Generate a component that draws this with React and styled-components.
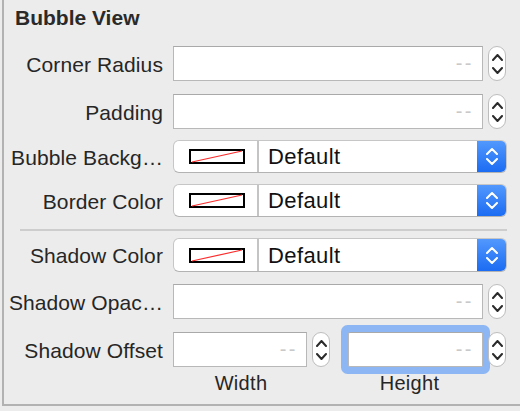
import styled, { createGlobalStyle } from "styled-components";

const GlobalStyle = createGlobalStyle`
  html, body {
    margin: 0;
    padding: 0;
    background: #ececec;
  }
  body {
    font-family: "Liberation Sans", Arial, Helvetica, sans-serif;
    color: #262626;
  }
`;

const Panel = styled.div`
  margin-left: 2px;
  height: 404px;
  border-left: 2px solid #b2b2b2;
  border-bottom: 2px solid #b2b2b2;
  box-sizing: content-box;
  display: flex;
  flex-direction: column;
`;

const Title = styled.div`
  padding: 6px 0 0 11px;
  height: 24px;
  line-height: 24px;
  font-size: 21px;
  font-weight: 700;
  color: #2a2a2a;
`;

const Row = styled.div`
  display: flex;
  align-items: center;
  height: ${(p) => p.$h}px;
  margin-top: ${(p) => p.$mt}px;
`;

const Label = styled.div`
  width: 159px;
  margin-right: 10px;
  text-align: right;
  font-size: 21px;
  letter-spacing: 0.1px;
  white-space: nowrap;
  line-height: 24px;
  padding-top: 2px;
`;

const Controls = styled.div`
  display: flex;
  align-items: center;
  gap: 5px;
  height: 100%;
`;

const Field = styled.div`
  box-sizing: border-box;
  width: ${(p) => p.$w}px;
  height: 35px;
  margin-left: ${(p) => p.$ml || 0}px;
  background: #fff;
  border: 1px solid #b8b8b8;
  border-top-color: #a9a9a9;
  border-radius: ${(p) => (p.$focused ? "2px" : "0")};
  box-shadow: ${(p) => (p.$focused ? "0 0 0 7px #8db6f4" : "none")};
  display: flex;
  align-items: center;
  justify-content: flex-end;
  padding-right: 8px;
  font-size: 20px;
  color: #c9c9c9;
  letter-spacing: 2.5px;
`;

const StepperBox = styled.div`
  box-sizing: border-box;
  width: 18px;
  height: 35px;
  background: #fff;
  border: 1px solid #bdbdbd;
  border-radius: 9px;
  display: flex;
  flex-direction: column;
  align-items: center;
  justify-content: center;
  gap: 6px;
  position: relative;
`;

const Popup = styled.div`
  box-sizing: border-box;
  width: 334px;
  height: ${(p) => p.$h}px;
  background: #fff;
  border: 1px solid #c6c6c6;
  border-bottom-color: #b3b3b3;
  border-radius: 6px;
  display: flex;
  overflow: hidden;
`;

const SwatchCell = styled.div`
  width: 81px;
  border-right: 2px solid #c4c4c4;
  display: flex;
  align-items: center;
  justify-content: center;
  padding-left: 2px;
`;

const PopupText = styled.div`
  flex: 1;
  padding-left: 9px;
  font-size: 22px;
  letter-spacing: 0.4px;
  color: #111;
  display: flex;
  align-items: center;
  padding-top: 1px;
`;

const BlueCap = styled.div`
  width: 29px;
  background: linear-gradient(#5298fd, #1c6cf3);
  display: flex;
  flex-direction: column;
  align-items: center;
  justify-content: center;
  gap: 3px;
`;

const Separator = styled.div`
  margin: 12px 0 0 16px;
  width: 487px;
  height: 2px;
  background: #cdcdcd;
`;

const SubLabels = styled.div`
  display: flex;
  margin: 4px 0 0 169px;
  height: 24px;
`;

const SubLabel = styled.div`
  width: ${(p) => p.$w}px;
  margin-left: ${(p) => p.$ml}px;
  text-align: center;
  font-size: 20px;
  line-height: 24px;
  letter-spacing: 0.3px;
`;

const Chevron = ({ up, color = "#2b2b2b", w = 9, h = 5 }) => (
  <svg width={w + 2} height={h + 2} viewBox={`0 0 ${w + 2} ${h + 2}`}>
    <polyline
      points={
        up
          ? `1,${h + 1} ${(w + 2) / 2},1 ${w + 1},${h + 1}`
          : `1,1 ${(w + 2) / 2},${h + 1} ${w + 1},1`
      }
      fill="none"
      stroke={color}
      strokeWidth="2"
      strokeLinecap="round"
      strokeLinejoin="round"
    />
  </svg>
);

const Stepper = () => (
  <StepperBox>
    <Chevron up />
    <Chevron />
  </StepperBox>
);

const Swatch = () => (
  <svg width="56" height="15" viewBox="0 0 56 15">
    <rect x="1" y="1" width="54" height="13" fill="#fff" stroke="#000" strokeWidth="2" />
    <line x1="3" y1="13" x2="53" y2="2" stroke="#ff2a2a" strokeWidth="1.2" />
  </svg>
);

const ColorPopup = ({ h = 33 }) => (
  <Popup $h={h}>
    <SwatchCell>
      <Swatch />
    </SwatchCell>
    <PopupText>Default</PopupText>
    <BlueCap>
      <Chevron up color="#fff" w={10} h={5} />
      <Chevron color="#fff" w={10} h={5} />
    </BlueCap>
  </Popup>
);

const NumberRow = ({ label, mt }) => (
  <Row $h={35} $mt={mt}>
    <Label>{label}</Label>
    <Controls>
      <Field $w={310}>--</Field>
      <Stepper />
    </Controls>
  </Row>
);

const ColorRow = ({ label, mt, h = 33 }) => (
  <Row $h={h} $mt={mt}>
    <Label>{label}</Label>
    <ColorPopup h={h} />
  </Row>
);

export default function App() {
  return (
    <>
      <GlobalStyle />
      <Panel>
        <Title>Bubble View</Title>
        <NumberRow label="Corner Radius" mt={16} />
        <NumberRow label="Padding" mt={13} />
        <ColorRow label="Bubble Backg…" mt={11} />
        <ColorRow label="Border Color" mt={11} />
        <Separator />
        <ColorRow label="Shadow Color" mt={7} h={34} />
        <NumberRow label="Shadow Opac…" mt={12} />
        <Row $h={35} $mt={13}>
          <Label>Shadow Offset</Label>
          <Controls>
            <Field $w={134}>--</Field>
            <Stepper />
            <Field $w={135} $ml={13} $focused>
              --
            </Field>
            <Stepper />
          </Controls>
        </Row>
        <SubLabels>
          <SubLabel $w={134} $ml={1}>Width</SubLabel>
          <SubLabel $w={135} $ml={34}>Height</SubLabel>
        </SubLabels>
      </Panel>
    </>
  );
}
